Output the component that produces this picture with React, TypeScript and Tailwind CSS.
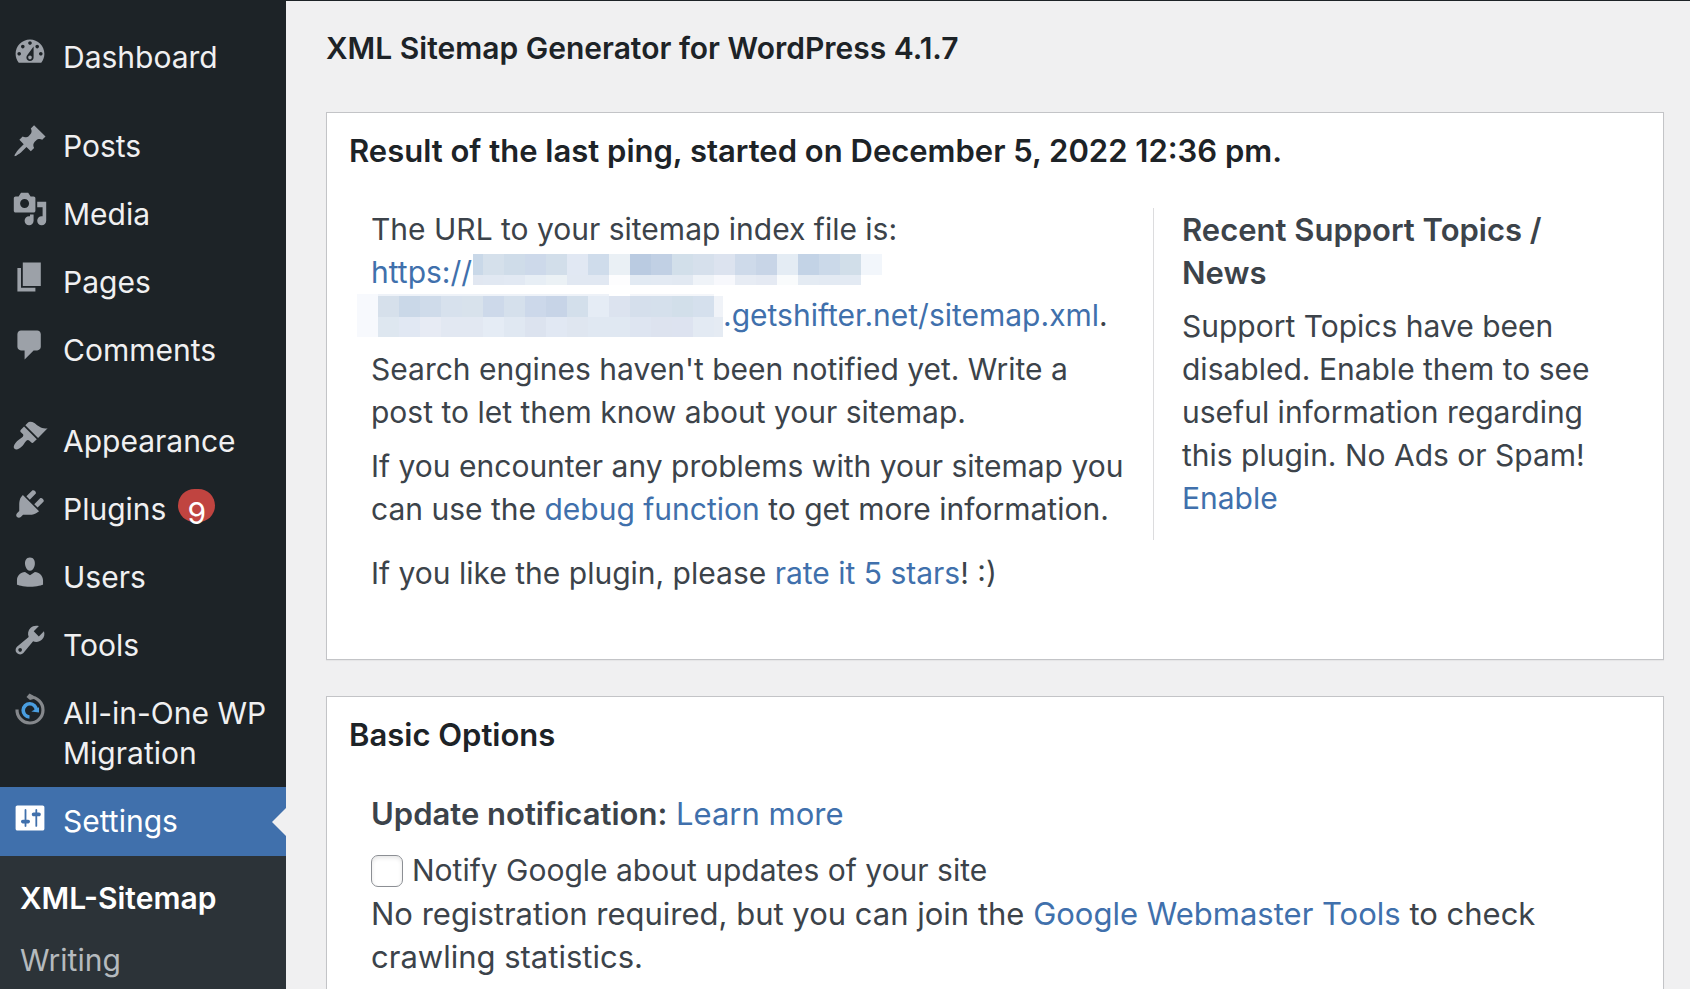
import type { ReactNode } from "react";
import clsx from "clsx";

// 20x20 admin menu glyphs
const ICONS = {
  dashboard:
    "M3.76 16h12.48C17.34 14.63 18 12.9 18 11c0-4.41-3.58-8-8-8s-8 3.59-8 8c0 1.9.66 3.63 1.76 5zM10 4c.55 0 1 .45 1 1s-.45 1-1 1-1-.45-1-1 .45-1 1-1zM6 6c.55 0 1 .45 1 1s-.45 1-1 1-1-.45-1-1 .45-1 1-1zm8 0c.55 0 1 .45 1 1s-.45 1-1 1-1-.45-1-1 .45-1 1-1zm-5.37 5.55L12 7v6c0 1.1-.9 2-2 2s-2-.9-2-2c0-.57.24-1.08.63-1.45zM4 10c.55 0 1 .45 1 1s-.45 1-1 1-1-.45-1-1 .45-1 1-1zm12 0c.55 0 1 .45 1 1s-.45 1-1 1-1-.45-1-1 .45-1 1-1zm-5 3c0-.55-.45-1-1-1s-1 .45-1 1 .45 1 1 1 1-.45 1-1z",
  posts:
    "M10.44 3.02l1.82-1.82 6.36 6.35-1.83 1.82c-1.05-.68-2.48-.57-3.41.36l-.75.75c-.92.93-1.04 2.35-.35 3.41l-1.83 1.82-2.41-2.41-2.8 2.79c-.42.42-3.38 2.71-3.8 2.29s1.86-3.39 2.28-3.81l2.79-2.79L4.1 9.36l1.83-1.82c1.05.69 2.48.57 3.4-.36l.75-.75c.93-.92 1.05-2.35.36-3.41z",
  media:
    "M13 11V4c0-.55-.45-1-1-1h-1.67L9 1H5L3.67 3H2c-.55 0-1 .45-1 1v7c0 .55.45 1 1 1h10c.55 0 1-.45 1-1zM7 4.5c1.38 0 2.5 1.12 2.5 2.5S8.38 9.5 7 9.5 4.5 8.38 4.5 7 5.62 4.5 7 4.5zM14 6h5v10.5c0 1.38-1.12 2.5-2.5 2.5S14 17.88 14 16.5s1.12-2.5 2.5-2.5c.17 0 .34.02.5.05V9h-3V6zm-4 8.05V13h2v3.5c0 1.38-1.12 2.5-2.5 2.5S7 17.88 7 16.5 8.12 14 9.5 14c.17 0 .34.02.5.05z",
  pages: "M6 15V2h10v13H6zm-1 1h8v2H3V5h2v11z",
  comments:
    "M5 2h9c1.1 0 2 .9 2 2v7c0 1.1-.9 2-2 2h-2l-5 5v-5H5c-1.1 0-2-.9-2-2V4c0-1.1.9-2 2-2z",
  appearance:
    "M14.48 11.06L7.41 3.99l1.5-1.5c.5-.56 2.3-.47 3.51.32 1.21.8 1.43 1.28 2.91 2.1 1.18.64 2.45 1.26 4.45.85zm-.71.71L6.7 4.7 4.93 6.47c-.39.39-.39 1.02 0 1.41l1.06 1.06c.39.39.39 1.03 0 1.42-.6.6-1.43 1.11-2.21 1.69-.35.26-.7.53-1.01.84C1.43 14.23.4 16.08 1.4 17.07c.99 1 2.84-.03 4.18-1.36.31-.31.58-.66.85-1.02.57-.78 1.08-1.61 1.69-2.21.39-.39 1.02-.39 1.41 0l1.06 1.06c.39.39 1.02.39 1.41 0z",
  plugins:
    "M13.11 4.36L9.87 7.6 8 5.73l3.24-3.24c.35-.34 1.05-.2 1.56.32.52.51.66 1.21.31 1.55zm-8 1.77l.91-1.12 9.01 9.01-1.19.84c-.71.71-2.63 1.16-3.82 1.16H6.14L4.9 17.26c-.59.59-1.54.59-2.12 0-.59-.58-.59-1.53 0-2.12l1.24-1.24v-3.88c0-1.13.4-3.19 1.09-3.89zm7.26 3.97l3.24-3.24c.34-.35 1.04-.21 1.55.31.52.51.66 1.21.31 1.55l-3.24 3.25z",
  users:
    "M10 9.25c-2.27 0-2.73-3.44-2.73-3.44C7 4.02 7.82 2 9.97 2c2.16 0 2.98 2.02 2.71 3.81 0 0-.41 3.44-2.68 3.44zm0 2.57L12.72 10c2.39 0 4.52 2.33 4.52 4.53v2.49s-3.65 1.13-7.24 1.13c-3.65 0-7.24-1.13-7.24-1.13v-2.49c0-2.25 1.94-4.48 4.47-4.48z",
  tools:
    "M16.68 9.77c-1.34 1.34-3.3 1.67-4.95.99l-5.41 6.52c-.99.99-2.59.99-3.58 0s-.99-2.59 0-3.57l6.52-5.42c-.68-1.65-.35-3.61.99-4.95 1.28-1.28 3.12-1.62 4.72-1.06l-2.89 2.89 2.82 2.82 2.86-2.87c.53 1.58.18 3.39-1.08 4.65zM3.81 16.21c.4.39 1.04.39 1.43 0 .4-.4.4-1.04 0-1.43-.39-.4-1.03-.4-1.43 0-.39.39-.39 1.03 0 1.43z",
  settings:
    "M18 16V4c0-.55-.45-1-1-1H3c-.55 0-1 .45-1 1v12c0 .55.45 1 1 1h14c.55 0 1-.45 1-1zM8 11h1c.55 0 1 .45 1 1s-.45 1-1 1H8v1.5c0 .28-.22.5-.5.5s-.5-.22-.5-.5V13H6c-.55 0-1-.45-1-1s.45-1 1-1h1V5.5c0-.28.22-.5.5-.5s.5.22.5.5V11zm5-2h-1c-.55 0-1-.45-1-1s.45-1 1-1h1V5.5c0-.28.22-.5.5-.5s.5.22.5.5V7h1c.55 0 1 .45 1 1s-.45 1-1 1h-1v5.5c0 .28-.22.5-.5.5s-.5-.22-.5-.5V9z",
};

function Glyph({ name }: { name: keyof typeof ICONS }) {
  return (
    <svg viewBox="0 0 20 20" className="size-9" fill="currentColor" aria-hidden="true">
      <path d={ICONS[name]} />
    </svg>
  );
}

function MigrationIcon() {
  return (
    <svg viewBox="0 0 36 36" className="size-9" fill="none" aria-hidden="true">
      <path d="M5 19.5A13 13 0 1 0 18 7" stroke="#85888c" strokeWidth="3.2" />
      <path d="M14.5 7L17.5 3.4l4 2.3v3.3L18 10z" fill="#85888c" />
      <path d="M17.5 27A6.6 6.6 0 1 1 24.4 20.4" stroke="#4a9ee0" strokeWidth="3.6" />
      <path d="M19.3 21.6l7.7-4.4v5.2z" fill="#4a9ee0" />
    </svg>
  );
}

function MenuItem({
  icon,
  children,
  current,
}: {
  icon: ReactNode;
  children: ReactNode;
  current?: boolean;
}) {
  return (
    <a
      href="#"
      className={clsx(
        "relative flex items-start gap-[15px] pl-3 leading-10",
        current ? "bg-[#4070ac] text-white" : "text-[#f0f0f1]"
      )}
    >
      <span className={clsx("shrink-0", current ? "pt-[13px]" : "pt-[11px] text-[#9ca1a8]")}>{icon}</span>
      <span className={current ? "pt-[14px] pb-[15px]" : "py-[14px]"}>{children}</span>
      {current && (
        <span className="absolute top-1/2 right-0 -translate-y-1/2 border-y-[14px] border-r-[14px] border-y-transparent border-r-[#f0f0f1]" />
      )}
    </a>
  );
}

// Pixelated host name, one colour per tile
const HOST_TOP = ["d5e0eb", "cfdce9", "cdd9ea", "d2deea", "e1e8f3", "cfdceb", "eaf0f5", "bacbe1", "c1d0e4", "d2dfea", "d6e0ec", "dce3ef", "cedaea", "c8d5e7", "e4ecf4", "c3d3e6", "cbd9e9", "d1dee9", "f2f6fb"];
const HOST_BOTTOM = ["e1e8f2", "e2e9f3", "e7eef5", "ebf1f5", "e1e8f2", "e1e8f2", "fdfdfe", "e2eaf3", "e3eaf3", "e2e9f2", "eff3f8", "f7f8fc", "e7ecf4", "e5eaf3", "f9fbfc", "e4ebf3", "e3eaf3", "e3eaf3"];
const SUB_TOP = ["d6e0eb", "cad8e8", "cfdbea", "d7e1ed", "d8e2ec", "cdd9ea", "d5e0ec", "ccd8ea", "c7d4e7", "d3dfeb", "e5ecf5", "dce3ef", "d5dfec", "d5e0ec", "d2dfea", "d5e0ed"];
const SUB_BOTTOM = ["dee7f0", "e1e8f3", "e7ebf4", "e2e8f2", "e2e8f2", "e5ecf5", "e0e8f2", "dce3ef", "e1e8f3", "dfe6f0", "e0e8f2", "e0e8f2", "dee5f1", "dde3ef", "dde3f0", "e3eaf3"];
const TILE = 21;

function Tiles({ colors, x, y, h }: { colors: string[]; x: number; y: number; h: number }) {
  return (
    <>
      {colors.map((c, i) => (
        <rect key={i} x={x + i * TILE} y={y} width={TILE} height={h} fill={`#${c}`} />
      ))}
    </>
  );
}

function HostMosaic() {
  return (
    <svg width="409" height="31" viewBox="0 0 409 31" shapeRendering="crispEdges" className="mt-[3px] ml-px inline-block align-top">
      <rect width="10" height="21" fill="#c9d8e8" />
      <rect y="21" width="10" height="10" fill="#e1e7f1" />
      <Tiles colors={HOST_TOP} x={10} y={0} h={21} />
      <Tiles colors={HOST_BOTTOM} x={10} y={21} h={10} />
    </svg>
  );
}

function SubdomainMosaic() {
  return (
    <svg width="366" height="43" viewBox="0 0 366 43" shapeRendering="crispEdges" className="-ml-[14px] inline-block align-top">
      <rect width="21" height="43" fill="#f7f9fd" />
      <rect x="21" width="231" height="2" fill="#eef2f8" />
      <rect x="273" width="84" height="2" fill="#f4f6fa" />
      <Tiles colors={SUB_TOP} x={21} y={2} h={21} />
      <Tiles colors={SUB_BOTTOM} x={21} y={23} h={20} />
      <rect x="357" y="2" width="9" height="21" fill="#f0f3f8" />
      <rect x="357" y="23" width="9" height="20" fill="#e5ebf3" />
    </svg>
  );
}

function Link({ children }: { children: ReactNode }) {
  return (
    <a href="#" className="text-[#4070ac] hover:underline">
      {children}
    </a>
  );
}

function Panel({ title, className, children }: { title: string; className?: string; children: ReactNode }) {
  return (
    <section className={clsx("border border-[#c3c4c7] bg-white pt-4 shadow-[0_1px_1px_rgba(0,0,0,0.04)]", className)}>
      <h3 className="px-[22px] text-[31px] font-semibold text-[#1d2327]">{title}</h3>
      <div className="px-11 pt-9">{children}</div>
    </section>
  );
}

export default function App() {
  return (
    <div className="flex min-h-screen bg-[#f0f0f1] font-['Inter',sans-serif] text-[30px] leading-[43px] text-[#3c434a]">
      {/* Admin menu */}
      <nav className="flex w-[286px] shrink-0 flex-col bg-[#1d2327] pt-[23px]">
        <MenuItem icon={<Glyph name="dashboard" />}>Dashboard</MenuItem>
        <div className="mt-[21px]">
          <MenuItem icon={<Glyph name="posts" />}>Posts</MenuItem>
          <MenuItem icon={<Glyph name="media" />}>Media</MenuItem>
          <MenuItem icon={<Glyph name="pages" />}>Pages</MenuItem>
          <MenuItem icon={<Glyph name="comments" />}>Comments</MenuItem>
        </div>
        <div className="mt-[23px]">
          <MenuItem icon={<Glyph name="appearance" />}>Appearance</MenuItem>
          <MenuItem icon={<Glyph name="plugins" />}>
            <span className="flex gap-3">
              Plugins
              <span className="h-[33px] w-[37px] rounded-[18px] bg-[#c04440] pt-1 text-center text-white">9</span>
            </span>
          </MenuItem>
          <MenuItem icon={<Glyph name="users" />}>Users</MenuItem>
          <MenuItem icon={<Glyph name="tools" />}>Tools</MenuItem>
          <MenuItem icon={<MigrationIcon />}>All-in-One WP Migration</MenuItem>
          <MenuItem icon={<Glyph name="settings" />} current>
            Settings
          </MenuItem>
        </div>
        <div className="flex flex-1 flex-col gap-[22px] bg-[#2c3338] px-5 pt-[22px] leading-10">
          <a href="#" className="font-semibold text-white">
            XML-Sitemap
          </a>
          <a href="#" className="text-[#b5babe]">
            Writing
          </a>
        </div>
      </nav>

      <main className="flex min-w-0 flex-1 flex-col border-t border-[#1d2327] pt-[26px] pr-[26px] pl-10">
        <h2 className="mb-[42px] font-semibold text-[#1d2327]">XML Sitemap Generator for WordPress 4.1.7</h2>

        <Panel title="Result of the last ping, started on December 5, 2022 12:36 pm." className="mb-9 pb-16">
          <div className="grid grid-cols-[782fr_466fr]">
            <div className="flex flex-col gap-[11px] pr-5">
              <p>
                The URL to your sitemap index file is:
                <br />
                <Link>
                  https://
                  <HostMosaic />
                  <br />
                  <SubdomainMosaic />
                  .getshifter.net/sitemap.xml
                </Link>
                .
              </p>
              <p>Search engines haven't been notified yet. Write a post to let them know about your sitemap.</p>
              <p>
                If you encounter any problems with your sitemap you can use the <Link>debug function</Link> to get more
                information.
              </p>
            </div>
            <aside className="border-l border-[#dcdcde] pb-5 pl-[28px]">
              <h4 className="mb-[11px] text-[31px] font-semibold">Recent Support Topics / News</h4>
              <p>
                Support Topics have been disabled. Enable them to see useful information regarding this plugin. No Ads
                or Spam! <Link>Enable</Link>
              </p>
            </aside>
          </div>
          <p className="mt-3">
            If you like the plugin, please <Link>rate it 5 stars</Link>! :)
          </p>
        </Panel>

        <Panel title="Basic Options" className="flex-1 border-b-0">
          <p className="text-[31px]">
            <b className="font-semibold">Update notification:</b> <Link>Learn more</Link>
          </p>
          <div className="mt-[14px] flex items-center gap-[9px]">
            <input
              id="notify-google"
              type="checkbox"
              className="size-8 appearance-none rounded-[7px] border border-[#8c8f94] bg-white shadow-[inset_0_2px_4px_rgba(0,0,0,0.1)]"
            />
            <label htmlFor="notify-google">Notify Google about updates of your site</label>
          </div>
          <p className="text-[31px]">
            No registration required, but you can join the <Link>Google Webmaster Tools</Link> to check crawling
            statistics.
          </p>
        </Panel>
      </main>
    </div>
  );
}
